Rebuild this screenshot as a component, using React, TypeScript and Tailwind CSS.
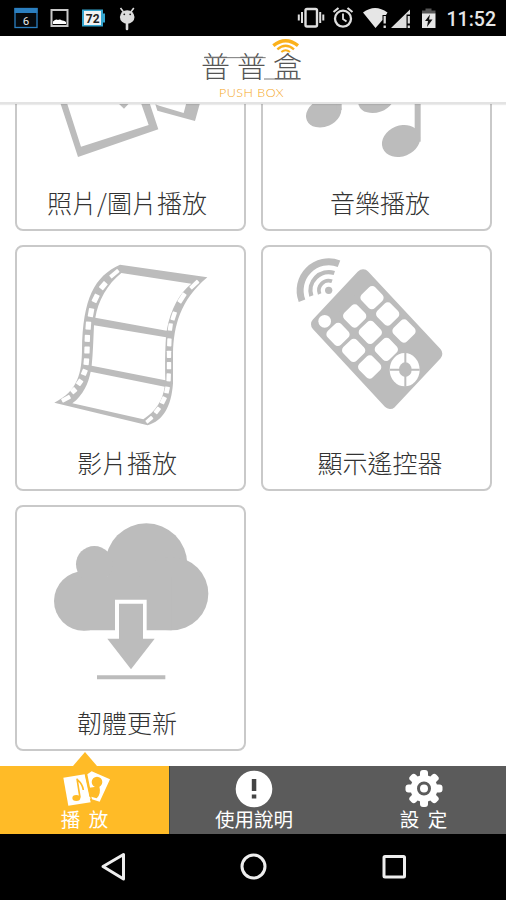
import React from "react";

const cjk = "font-['Noto_Sans_CJK_TC',sans-serif]";
const GRAY = "#bcbcbc";

type Hole = [number, number, number, number, number];

const FILM_HOLES: Hole[] = [
  [343, 101, 12, 32, 50], [310, 137, 16, 24, 40], [287, 175, 16, 25, 26], [273, 218, 16, 26, 10],
  [265, 257, 16, 24, 4], [262, 295, 16, 21, 2], [261, 330, 16, 21, 2], [259, 365, 16, 20, 5],
  [253, 397, 16, 18, 22], [239, 427, 16, 18, 35], [221, 452, 16, 17, 48], [198, 476, 13, 28, 62],
  [583, 134, 12, 32, 47], [546, 174, 14, 32, 33], [521, 228, 13, 26, 18], [511, 261, 13, 22, 8],
  [508, 307, 13, 24, 2], [507, 343, 13, 22, 0], [507, 377, 13, 22, 0], [506, 412, 13, 24, 2],
  [501, 450, 14, 20, 12], [490, 481, 14, 22, 26], [472, 511, 13, 21, 38], [448, 539, 11, 24, 50],
];

const BUTTONS = [
  [357, 173], [404, 222], [453, 273],
  [305, 228], [352, 277], [400, 328],
  [255, 283], [302, 331], [350, 381],
];

function Photos() {
  return (
    <svg width="227" height="195" viewBox="51 -324 681 585" fill={GRAY}>
      <path fillRule="evenodd" d="M234 186 475 103 397 -132 130 -132Z M243 155 446 90 376 -110 158 -110Z" />
      <path d="M352 22 372 41 390 22Z" />
      <path d="M466 28 472 47 585 78 640 -120 600 -130 551 54 478 32Z" />
    </svg>
  );
}

function Music() {
  return (
    <svg width="227" height="195" viewBox="30 -324 681 585" fill={GRAY}>
      <ellipse cx="212" cy="54" rx="55" ry="41" transform="rotate(-24 212 54)" />
      <ellipse cx="370" cy="12" rx="56" ry="40" transform="rotate(-20 370 12)" />
      <ellipse cx="444" cy="138" rx="59" ry="46" transform="rotate(-22 444 138)" />
      <path d="M485 -150h18v290h-18z" />
      <path d="M250 -200h16v245h-16z" />
    </svg>
  );
}

function Film() {
  return (
    <svg width="227" height="195" viewBox="51 21 681 585" fill={GRAY}>
      <path d="M360 74 622 112C540 180 521 260 519 340L519 430C514 500 490 542 443 556L163 488C236 452 245 395 246 330C248 175 284 108 360 74Z" />
      <g fill="#fff">
        <path d="M364 99 574 131C540 158 512 205 500 272L286 233C294 184 322 132 364 99Z" />
        <path d="M282 256 498 292C495 330 495 380 496 421L275 377C279 340 280 300 282 256Z" />
        <path d="M272 395 494 440C488 482 468 512 430 538L217 490C250 465 265 430 272 395Z" />
        {FILM_HOLES.map(([x, y, w, h, r], i) => (
          <rect key={i} x={x - w / 2} y={y - h / 2} width={w} height={h} rx="2" transform={`rotate(${r} ${x} ${y})`} />
        ))}
      </g>
    </svg>
  );
}

function Remote() {
  return (
    <svg width="227" height="195" viewBox="30 21 681 585" fill={GRAY}>
      <path d="M330 109 195 253 411 486 547 341Z" stroke={GRAY} strokeWidth="42" strokeLinejoin="round" />
      <g fill="#fff">
        {BUTTONS.map(([x, y]) => (
          <rect key={`${x}-${y}`} x={x - 28.5} y={y - 28.5} width="57" height="57" rx="13" transform={`rotate(46 ${x} ${y})`} />
        ))}
        <circle cx="215" cy="244" r="19" />
        <ellipse cx="455" cy="389" rx="45" ry="50" />
      </g>
      <path d="M410 389h90M457 338v102" stroke={GRAY} strokeWidth="6" />
      <ellipse cx="457" cy="389" rx="19" ry="22" />
      <circle cx="227" cy="151" r="11" />
      <g fill="none" stroke={GRAY}>
        <path d="M200 162A29 29 0 0 1 237 124" strokeWidth="11" />
        <path d="M175 168A55 55 0 0 1 244 99" strokeWidth="13" />
        <path d="M147 182A86 86 0 0 1 258 71" strokeWidth="21" />
      </g>
    </svg>
  );
}

function CloudUpdate() {
  return (
    <svg width="227" height="195" viewBox="51 21 681 585" fill={GRAY}>
      <circle cx="439" cy="193" r="123" />
      <circle cx="515" cy="281" r="110" />
      <circle cx="251" cy="303" r="89" />
      <circle cx="283" cy="193" r="55" />
      <path d="M250 230h265v161H250z" />
      <path d="M345 299h95v100h-95z" fill="#fff" />
      <path d="M357 311h72v105h35L393 508 322 416h35z" />
      <path d="M291 526h205v12H291z" />
    </svg>
  );
}

function Card({ label, right, children }: { label: string; right?: boolean; children: React.ReactNode }) {
  return (
    <div className="flex h-[246px] flex-col items-center rounded-lg border-2 border-[#c9c9c9] bg-white">
      {children}
      <span className={`${cjk} -mt-px text-[25px] leading-[42px] font-light text-[#333] ${right ? "pl-[7px]" : "pr-[7px]"}`}>{label}</span>
    </div>
  );
}

function StatusBar() {
  return (
    <div className="flex h-9 shrink-0 items-center justify-between bg-black pr-[10px] pl-[14px]">
      <svg width="130" height="36" viewBox="14 0 130 36">
        <rect x="15" y="8.500" width="22" height="19" fill="#05090d" stroke="#2b7fc0" strokeWidth="1.300" />
        <path d="M14.500 8h23v5h-23z" fill="#2b7fc0" />
        <text x="26" y="24.500" textAnchor="middle" fontSize="11.500" fontFamily="Roboto, sans-serif" fill="#e8e8e8">6</text>
        <rect x="51.500" y="10" width="16" height="16" fill="none" stroke="#c8c8c8" strokeWidth="2" />
        <path d="M53 24v-2.500q3-3 5-1.500 2-1 4 .5 2-.5 4 1.500v2z" fill="#fff" />
        <path d="M82 9.500h21v4h2v9h-2v4H82z" fill="#35a5cf" />
        <path d="M84 11h17v14H84z" fill="#f2f2f2" />
        <text x="92.700" y="22.500" textAnchor="middle" fontSize="12" fontWeight="700" fontFamily="Roboto, sans-serif" fill="#222">72</text>
        <ellipse cx="127.200" cy="17" rx="7.300" ry="6.800" fill="#ddd" />
        <path d="M120.500 8 123.500 12M133.800 8l-3 4" stroke="#ddd" strokeWidth="1.600" />
        <path d="M127 22v7" stroke="#ddd" strokeWidth="2.600" strokeLinecap="round" />
        <circle cx="124.300" cy="14.300" r=".9" fill="#222" />
        <circle cx="130.200" cy="14.300" r=".9" fill="#222" />
      </svg>
      <div className="flex items-center">
        <svg width="147" height="36" viewBox="296 0 147 36" fill="none" stroke="#dedede">
          <rect x="305.500" y="9" width="11.500" height="17.500" rx="1.500" strokeWidth="2.400" />
          <path d="M302 12v11M298.800 14.500v6M320.200 12v11M323.300 14.500v6" strokeWidth="2" />
          <circle cx="343" cy="18.700" r="8" strokeWidth="2.300" />
          <path d="M343 13.500v5.500l3.500 2.500" strokeWidth="1.800" />
          <path d="M333.500 12l5-4M352.500 12l-5-4" strokeWidth="2.200" />
          <path d="M363 12.500Q375 3.500 387.500 12.500L386 15h-3.500v5L375.500 28Z" fill="#e6e6e6" stroke="none" />
          <path d="M384.700 16v7.500M384.700 25.500v2.500" strokeWidth="2.300" />
          <path d="M391 28 410 9.500v5h-3.500V28Z" fill="#dedede" stroke="none" />
          <path d="M408.800 16v7.500M408.800 25.500v2.500" strokeWidth="2.200" />
          <path d="M422 14v-3.500h3.500V8.500h6v2h4V14Z" fill="#555" stroke="none" />
          <path d="M422 13.500h13.500V28H422Z" fill="#e6e6e6" stroke="none" />
          <path d="M430 14.500 425 21h3l-1 6 5.500-7.500h-3.500z" fill="#111" stroke="none" />
        </svg>
        <span className="w-[53px] pt-[4px] text-right font-['Roboto',sans-serif] text-[19.500px] leading-8 font-medium text-[#e6e6e6]">11:52</span>
      </div>
    </div>
  );
}

function Header() {
  return (
    <header className="relative z-10 flex h-[68px] shrink-0 flex-col items-center border-b-2 border-[#e3e3e3] bg-white pt-[12px] shadow-[0_1px_1px_rgba(0,0,0,0.08)]">
      <div className={`${cjk} mr-[3px] flex h-[34px] items-center gap-[7px] text-[29px] leading-[34px] font-light text-[#555]`}>
        <span>普</span>
        <span>普</span>
        <span>盒</span>
      </div>
      <span className="mt-[5px] mr-[3px] font-['Lato',sans-serif] text-[12.500px] leading-[12px] font-light tracking-[0.5px] text-[#f5a623]">PUSH BOX</span>
      <svg className="absolute top-0 left-[190px]" width="120" height="66" viewBox="0 3 360 198" fill="none">
        <path d="M42 68h185M222 132h110" stroke="#777" strokeWidth="3" />
        <g stroke="#fbb11b">
          <path d="M250 32Q287 2 324 32" strokeWidth="10" />
          <path d="M262 43Q287 22 312 43" strokeWidth="7" />
          <path d="M274 51Q287 40 300 51" strokeWidth="6" />
        </g>
      </svg>
    </header>
  );
}

function Tab({ label, active, className = "", children }: { label: string; active?: boolean; className?: string; children: React.ReactNode }) {
  return (
    <div className={`relative flex flex-col items-center ${active ? "bg-[#ffbb27]" : "bg-[#5b5b5b]"} ${className}`}>
      {active && (
        <svg className="absolute -top-[14px] left-[73px]" width="24" height="15" viewBox="0 0 24 15">
          <path d="M12 0 24 14v1H0v-1z" fill="#ffbb27" />
        </svg>
      )}
      {children}
      <span className={`${cjk} text-[19.500px] leading-[20px] font-normal whitespace-pre text-white`}>{label}</span>
    </div>
  );
}

export default function App() {
  return (
    <div className="flex h-[900px] w-[506px] flex-col overflow-hidden bg-white">
      <StatusBar />
      <Header />
      <main className="min-h-0 flex-1 overflow-hidden px-[15px]">
        <div className="-mt-[119px] grid grid-cols-[231px_231px] gap-x-[15px] gap-y-[14px]">
          <Card label="照片/圖片播放"><Photos /></Card>
          <Card label="音樂播放" right><Music /></Card>
          <Card label="影片播放"><Film /></Card>
          <Card label="顯示遙控器" right><Remote /></Card>
          <Card label="韌體更新"><CloudUpdate /></Card>
        </div>
      </main>
      <nav className="grid h-[68px] shrink-0 grid-cols-[169px_169px_168px]">
        <Tab label="播  放" active>
          <svg className="shrink-0" width="60" height="43" viewBox="165 63 180 129">
            <path d="M190 98 254 88 272 172 205 182Z" fill="#fff" />
            <path d="M275 79 330 103 299 170 266 160 274 148 262 88Z" fill="#fff" />
            <ellipse cx="229" cy="159" rx="12" ry="9" fill="#ffbb27" />
            <path d="M231 101 240 158M232 104Q248 118 250 135" stroke="#ffbb27" strokeWidth="5" fill="none" />
            <path d="M257 88 275 168" stroke="#ffbb27" strokeWidth="4" />
            <circle cx="291" cy="111" r="16" fill="#ffbb27" />
            <path d="M268 128 298 124Q304 148 290 160L268 154Z" fill="#ffbb27" />
          </svg>
        </Tab>
        <Tab label="使用說明" className="border-l border-[#3f4a44]">
          <svg className="shrink-0" width="60" height="43" viewBox="0 0 60 43">
            <circle cx="30" cy="23" r="18.300" fill="#fff" />
            <path d="M27.800 13h4.500v12h-4.500zM27.800 28.500h4.500v4h-4.500z" fill="#444" />
          </svg>
        </Tab>
        <Tab label="設  定" className="pl-[3px]">
          <svg className="shrink-0" width="60" height="43" viewBox="0 0 60 43">
            <g transform="translate(30 22.500)" fill="#fff">
              <circle r="13.500" />
              {[0, 45, 90, 135].map((a) => (
                <rect key={a} x="-4" y="-18.500" width="8" height="37" rx="3" transform={`rotate(${a})`} />
              ))}
              <circle r="5.500" stroke="#5b5b5b" strokeWidth="3" />
            </g>
          </svg>
        </Tab>
      </nav>
      <footer className="flex h-[66px] shrink-0 items-center bg-black">
        <svg width="506" height="66" viewBox="0 0 506 66" fill="none" stroke="#eee" strokeWidth="3" strokeLinejoin="round">
          <path d="M103 32.500 123.500 20.500v24.500z" />
          <circle cx="253.500" cy="32.500" r="11.500" />
          <rect x="384" y="22.500" width="20.500" height="20.500" rx="1" />
        </svg>
      </footer>
    </div>
  );
}
